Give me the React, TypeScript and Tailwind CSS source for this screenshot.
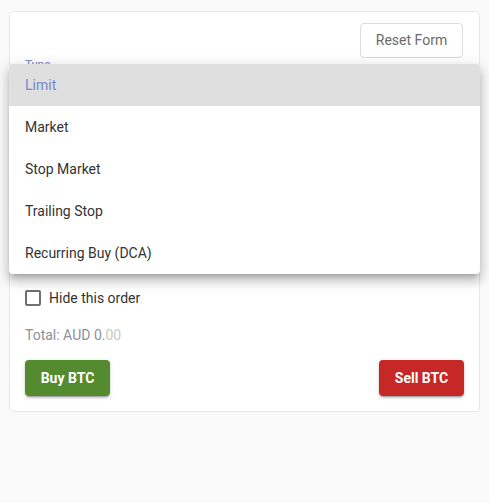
const orderTypes = ["Limit", "Market", "Stop Market", "Trailing Stop", "Recurring Buy (DCA)"];

export default function App() {
  return (
    <div className="min-h-[503px] bg-[#fafafa] px-[9px] pt-[11px] font-['Roboto',sans-serif]">
      <div className="relative flex flex-col rounded-[4px] border border-[#e8e8e8] bg-white px-[15px] pt-[11px] pb-[15px]">
        <div className="flex justify-end pr-px">
          <button className="h-[35px] w-[103px] rounded-[4px] border border-[#dcdcdc] bg-white text-[14px] text-[#6b6b6b]">
            Reset Form
          </button>
        </div>
        <div className="h-[14px] text-[12px] leading-[14px] text-[#7986cb]">Type</div>

        {/* fields under the open menu */}
        <div className="h-[214px]" />

        <label className="flex h-[24px] items-center gap-[8px]">
          <span className="h-[16px] w-[16px] rounded-[2px] border-2 border-[#6f6f6f]" />
          <span className="text-[14px] text-[#333]">Hide this order</span>
        </label>

        <div className="mt-[17px] text-[14px] leading-[16px] text-[#8b909a]">
          Total: AUD 0.<span className="text-[#c8c8c8]">00</span>
        </div>

        <div className="mt-[17px] flex justify-between">
          <button className="h-[36px] w-[85px] rounded-[4px] bg-[#558b2f] text-[14px] font-bold text-white shadow-[0_3px_1px_-2px_rgba(0,0,0,0.2),0_2px_2px_0_rgba(0,0,0,0.14),0_1px_5px_0_rgba(0,0,0,0.12)]">
            Buy BTC
          </button>
          <button className="h-[36px] w-[85px] rounded-[4px] bg-[#c62828] text-[14px] font-bold text-white shadow-[0_3px_1px_-2px_rgba(0,0,0,0.2),0_2px_2px_0_rgba(0,0,0,0.14),0_1px_5px_0_rgba(0,0,0,0.12)]">
            Sell BTC
          </button>
        </div>

        <ul className="absolute -left-px top-[52px] w-[471px] overflow-hidden rounded-[4px] bg-white shadow-[0_5px_5px_-3px_rgba(0,0,0,0.2),0_8px_10px_1px_rgba(0,0,0,0.14),0_3px_14px_2px_rgba(0,0,0,0.12)]">
          {orderTypes.map((t, i) => (
            <li
              key={t}
              className={
                i === 0
                  ? "flex h-[42px] items-center bg-[#dfdfdf] px-[16px] text-[14px] text-[#7986cb]"
                  : "flex h-[42px] items-center px-[16px] text-[14px] text-[#333]"
              }
            >
              {t}
            </li>
          ))}
        </ul>
      </div>
    </div>
  );
}
